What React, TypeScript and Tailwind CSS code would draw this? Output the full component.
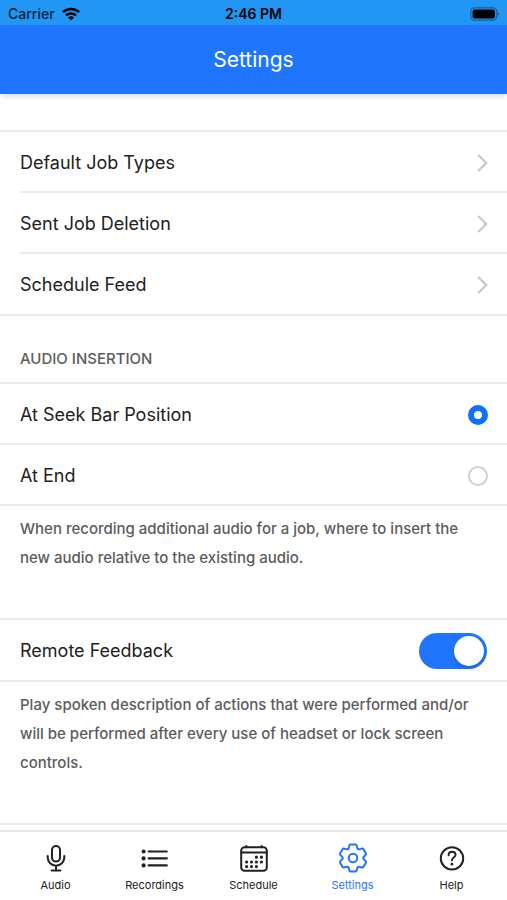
import { useState } from 'react';
import type { ReactNode } from 'react';

const linkRows = ['Default Job Types', 'Sent Job Deletion', 'Schedule Feed'];
const insertionOptions = ['At Seek Bar Position', 'At End'];

function MicIcon() {
  return (
    <svg viewBox="0 0 32 32" className="size-8" fill="none" stroke="currentColor" strokeWidth="2" strokeLinecap="round">
      <rect x="12" y="4" width="8" height="15.6" rx="4" />
      <path d="M7.7 14v1.4a8.3 8.3 0 0 0 16.6 0V14M16 24v4M11.6 28.4h8.8" />
    </svg>
  );
}

function ListIcon() {
  return (
    <svg viewBox="0 0 32 32" className="size-8" fill="none" stroke="currentColor" strokeWidth="2.1" strokeLinecap="round">
      <path d="M9.6 9.5h18.2M9.6 16.4h18.2M9.6 23.4h18.2" />
      <path d="M4.6 9.5h.01M4.6 16.4h.01M4.6 23.4h.01" strokeWidth="4.2" />
    </svg>
  );
}

function CalendarIcon() {
  return (
    <svg viewBox="0 0 32 32" className="size-8" fill="none" stroke="currentColor" strokeWidth="2" strokeLinecap="round">
      <rect x="3.2" y="5.2" width="25.6" height="23.6" rx="3.4" />
      <path d="M3.4 10.4h25.2M8.4 4v1.2M23.6 4v1.2" />
      <path
        d="M18.4 15.2h.01M23.4 15.2h.01M8.6 20h.01M13.5 20h.01M18.4 20h.01M23.4 20h.01M8.6 24.6h.01M13.5 24.6h.01M18.4 24.6h.01"
        strokeWidth="3.2"
      />
    </svg>
  );
}

function GearIcon() {
  return (
    <svg viewBox="-16 -16 32 32" className="size-8" fill="none" stroke="currentColor" strokeWidth="2" strokeLinecap="round">
      <circle r="4.3" />
      {[0, 60, 120, 180, 240, 300].map((angle) => (
        <path
          key={angle}
          transform={`rotate(${angle})`}
          d="M-5.2 -9C-4.2 -9.4 -3.9 -10.3 -3.8 -12Q-3.6 -13.5 -2.4 -13.5H2.4Q3.6 -13.5 3.8 -12C3.9 -10.3 4.2 -9.4 5.2 -9"
        />
      ))}
    </svg>
  );
}

function HelpIcon() {
  return (
    <svg viewBox="0 0 32 32" className="size-8" fill="none" stroke="currentColor" strokeWidth="2" strokeLinecap="round">
      <circle cx="16" cy="16.4" r="11.2" />
      <path d="M12.6 13.2c0-2.1 1.3-3.5 3.5-3.5s3.5 1.3 3.5 3.1c0 2.8-3.7 2.8-3.7 5.6" strokeWidth="1.9" />
      <path d="M15.9 22.2h.01" strokeWidth="2.7" />
    </svg>
  );
}

const tabs: { label: string; icon: ReactNode }[] = [
  { label: 'Audio', icon: <MicIcon /> },
  { label: 'Recordings', icon: <ListIcon /> },
  { label: 'Schedule', icon: <CalendarIcon /> },
  { label: 'Settings', icon: <GearIcon /> },
  { label: 'Help', icon: <HelpIcon /> },
];

function StatusBar() {
  return (
    <div className="grid h-[25px] grid-cols-3 items-center bg-[#2196f3] px-2 pt-0.5 text-sm text-[#04213f]">
      <div className="flex items-center gap-1.5">
        <span className="font-medium">Carrier</span>
        <svg viewBox="0 0 20 14" className="h-3.5 w-5 text-black" fill="none" stroke="currentColor" strokeWidth="2.5">
          <path d="M1.9 5.2a11.6 11.6 0 0 1 16.2 0M5 8.4a7.2 7.2 0 0 1 10 0" />
          <path d="M10 13.6 7 10.6a4.3 4.3 0 0 1 6 0z" fill="currentColor" stroke="none" />
        </svg>
      </div>
      <span className="text-center font-semibold text-black">2:46 PM</span>
      <svg viewBox="0 0 30 14" className="h-3.5 w-[30px] justify-self-end">
        <rect x="1.8" y="0.8" width="26" height="12.4" rx="3.6" fill="none" stroke="#14609f" strokeWidth="1.2" />
        <rect x="3.6" y="2.6" width="22.4" height="8.8" rx="2" />
        <path d="M28.8 5v4q1.2-.6 1.2-2t-1.2-2z" fill="#14609f" />
      </svg>
    </div>
  );
}

export default function App() {
  const [insertion, setInsertion] = useState(insertionOptions[0]);
  const [feedback, setFeedback] = useState(true);
  const [activeTab, setActiveTab] = useState('Settings');

  return (
    <div className="flex min-h-screen flex-col bg-white font-['Inter','Liberation_Sans',sans-serif] text-[#212121]">
      <header className="shadow-md">
        <StatusBar />
        <div className="flex h-[69px] items-center justify-center bg-[#1f75fe]">
          <h1 className="text-[21px] text-white">Settings</h1>
        </div>
      </header>

      <main className="grow pt-9">
        <ul className="border-y-2 border-[#ebebeb]">
          {linkRows.map((label) => (
            <li key={label} className="group pl-5">
              <a
                href="#"
                className="flex h-[61px] items-center justify-between border-b-2 border-[#ebebeb] pt-0.5 pr-[18px] text-lg group-last:h-[60px] group-last:border-b-0"
              >
                {label}
                <svg viewBox="0 0 12 20" className="h-5 w-3" fill="none" stroke="#c7c7cc" strokeWidth="2.2">
                  <path d="M1.2 2 9.2 10l-8 8" />
                </svg>
              </a>
            </li>
          ))}
        </ul>

        <fieldset>
          <legend className="flex h-[66px] w-full items-center pt-5 pl-5 text-[15px] font-medium text-[#5c5c5c]">
            AUDIO INSERTION
          </legend>
          <div className="border-t-2 border-[#ebebeb]">
            {insertionOptions.map((option) => (
              <label
                key={option}
                className="flex h-[61px] items-center justify-between border-b-2 border-[#ebebeb] pt-0.5 pr-[19px] pl-5 text-lg"
              >
                {option}
                <input
                  type="radio"
                  name="insertion"
                  checked={insertion === option}
                  onChange={() => setInsertion(option)}
                  className="size-5 appearance-none rounded-full border-2 border-[#cfcfcf] checked:border-6 checked:border-[#1170fb]"
                />
              </label>
            ))}
          </div>
        </fieldset>
        <p className="px-5 pt-2 pb-[46px] text-[15px] leading-[29px] font-medium text-[#5c5c5c]">
          When recording additional audio for a job, where to insert the new audio relative to the existing audio.
        </p>

        <label className="flex h-16 items-center justify-between border-y-2 border-[#ebebeb] px-5 pt-0.5 text-lg">
          Remote Feedback
          <input
            type="checkbox"
            role="switch"
            checked={feedback}
            onChange={() => setFeedback(!feedback)}
            className="h-9 w-[68px] appearance-none rounded-full bg-[#e5e5ea] p-[3px] before:block before:size-[30px] before:rounded-full before:bg-white before:shadow-md checked:bg-[#1f75fe] checked:before:ml-8"
          />
        </label>
        <p className="border-b-2 border-[#ebebeb] px-5 pt-2 pb-[46px] text-[15px] leading-[29px] font-medium text-[#5c5c5c]">
          Play spoken description of actions that were performed and/or will be performed after every use of headset
          or lock screen controls.
        </p>
      </main>

      <nav className="grid grid-cols-5 border-t-2 border-[#e6e6e6] px-1.5 pt-2.5 pb-[7px]">
        {tabs.map(({ label, icon }) => (
          <button
            key={label}
            onClick={() => setActiveTab(label)}
            className={`flex flex-col items-center gap-[3px] text-[11px] leading-4 ${activeTab === label ? 'text-[#1f75fe]' : 'text-[#212121]'}`}
          >
            {icon}
            {label}
          </button>
        ))}
      </nav>
    </div>
  );
}
